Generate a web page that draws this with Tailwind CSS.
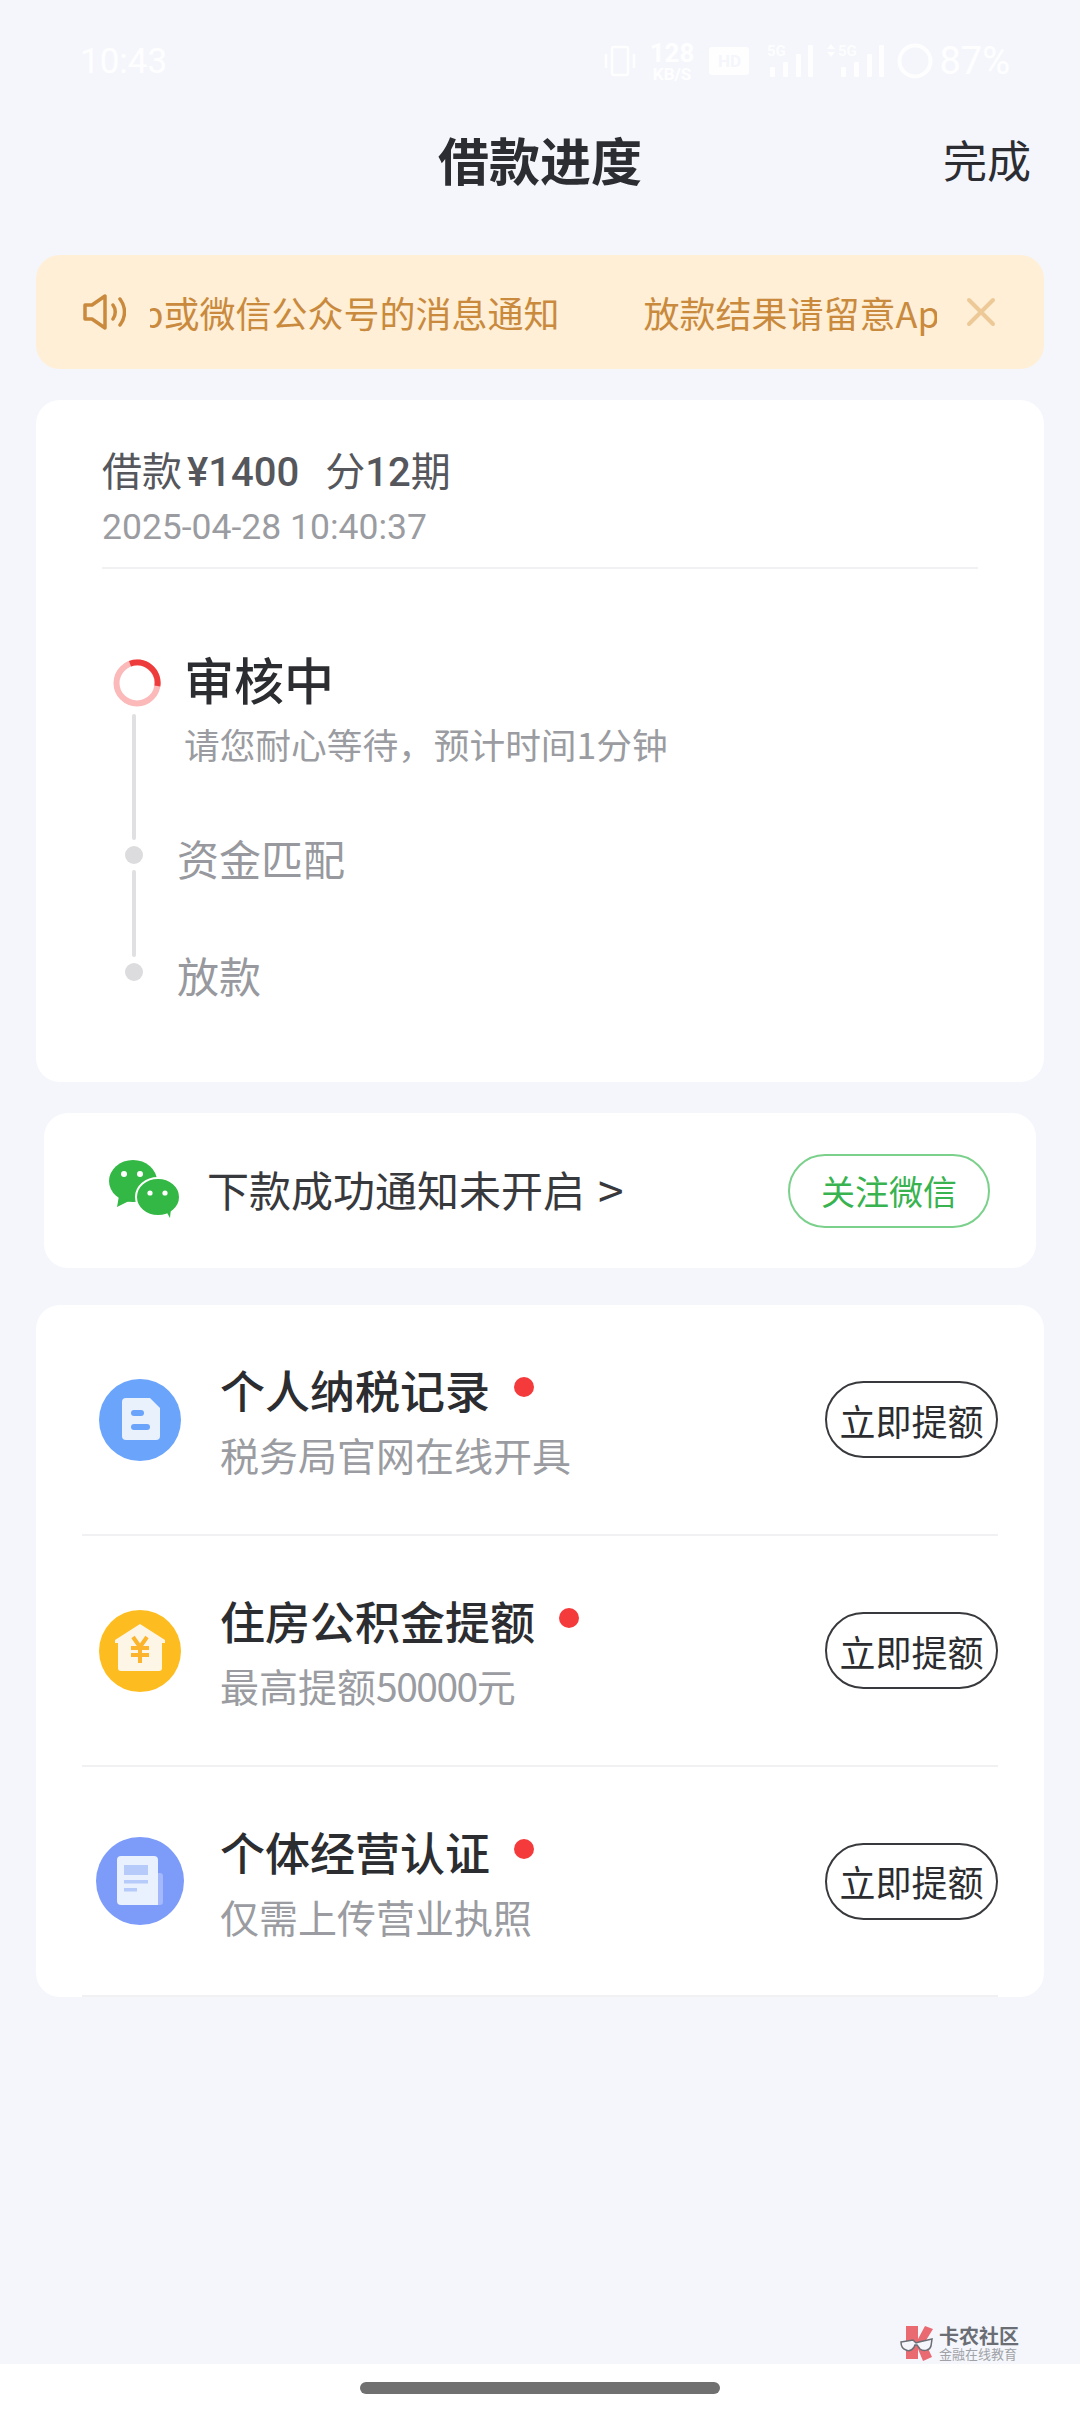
<!DOCTYPE html>
<html lang="zh-CN">
<head>
<meta charset="utf-8">
<script src="https://cdn.jsdelivr.net/npm/@tailwindcss/browser@4"></script>
<title>借款进度</title>
</head>
<body class="m-0">
<div class="relative w-[1080px] h-[2412px] overflow-hidden flex flex-col bg-[#f4f6fb] font-['Noto_Sans_CJK_SC',sans-serif] text-[#2b2d33]">

  <!-- status bar -->
  <div class="h-[122px] shrink-0 flex items-center justify-between pl-[80px] pr-[70px] text-white/90 font-['Roboto',sans-serif]">
    <span class="text-[35px] leading-none">10:43</span>
    <div class="flex items-center">
      <svg width="32" height="34" viewBox="0 0 32 34" fill="none" stroke="#fff" stroke-opacity=".9" stroke-width="2.5"><rect x="8" y="3" width="16" height="28" rx="2"/><path d="M2 10v14M30 10v14"/></svg>
      <div class="ml-[14px] flex flex-col items-center font-bold">
        <span class="text-[26px] leading-[26px]">128</span>
        <span class="text-[17px] leading-[17px]">KB/S</span>
      </div>
      <div class="ml-[15px] w-[40px] h-[28px] bg-white/90 rounded-[3px] flex items-center justify-center text-[#f4f6fb] text-[17px] font-bold leading-none">HD</div>
      <svg width="47" height="36" viewBox="0 0 47 36" fill="#fff" fill-opacity=".9" class="ml-[18px]"><text x="0" y="13" font-size="15" font-weight="700" font-family="Roboto">5G</text><rect x="3" y="24" width="5" height="10" rx="1"/><rect x="16" y="19" width="5" height="15" rx="1"/><rect x="29" y="11" width="5" height="23" rx="1"/><rect x="41" y="2" width="5" height="32" rx="1"/></svg>
      <svg width="58" height="36" viewBox="0 0 58 36" fill="#fff" fill-opacity=".9" class="ml-[13px]"><path d="M0 6l4-5 4 5zM0 9l4 5 4-5z"/><text x="11" y="13" font-size="15" font-weight="700" font-family="Roboto">5G</text><rect x="14" y="24" width="5" height="10" rx="1"/><rect x="27" y="19" width="5" height="15" rx="1"/><rect x="40" y="11" width="5" height="23" rx="1"/><rect x="52" y="2" width="5" height="32" rx="1"/></svg>
      <svg width="36" height="36" viewBox="0 0 36 36" fill="none" stroke="#fff" stroke-opacity=".9" stroke-width="4" class="ml-[12px]"><circle cx="18" cy="18" r="15.5"/></svg>
      <span class="ml-[6px] text-[38px] leading-none">87%</span>
    </div>
  </div>

  <!-- header -->
  <div class="h-[74px] shrink-0 grid grid-cols-3 items-center">
    <span></span>
    <h1 class="text-center text-[51px] leading-none font-bold">借款进度</h1>
    <span class="text-right pr-[49px] text-[44px] leading-none">完成</span>
  </div>

  <!-- notice -->
  <div class="mt-[59px] mx-[36px] h-[114px] shrink-0 rounded-[24px] bg-[#ffefd6] flex items-center pl-[46px] pr-[46px] text-[#c98a3e]">
    <svg width="44" height="38" viewBox="0 0 44 38" fill="none" stroke="#c98a3e" stroke-width="3.5" stroke-linejoin="round" stroke-linecap="round" class="shrink-0"><path d="M3 12h7L23 3v32L10 26H3z"/><path d="M31 12c3 4 3 10 0 14M38 6c6 8 6 18 0 26"/></svg>
    <div class="ml-[24px] w-[787px] overflow-hidden shrink-0">
      <div class="flex whitespace-nowrap text-[36px] leading-[50px] -ml-[305px]">
        <span class="shrink-0">放款结果请留意App或微信公众号的消息通知</span>
        <span class="shrink-0 pl-[84px]">放款结果请留意App或微信公众号的消息通知</span>
      </div>
    </div>
    <svg width="32" height="32" viewBox="0 0 32 32" fill="none" stroke="#edc998" stroke-width="4" stroke-linecap="round" class="ml-[28px] shrink-0"><path d="M4 4l24 24M28 4L4 28"/></svg>
  </div>

  <!-- progress card -->
  <div class="mt-[31px] mx-[36px] h-[682px] shrink-0 rounded-[24px] bg-white pt-[44px] px-[66px]">
    <div class="pb-[20px] border-b-2 border-[#f1f1f3]">
      <div class="flex items-baseline text-[40px] leading-[50px] text-[#55575c] font-['Roboto','Noto_Sans_CJK_SC',sans-serif]"><span class="font-['Noto_Sans_CJK_SC',sans-serif]">借款</span><span class="ml-[5px] font-medium">¥1400</span><span class="ml-[26px] font-['Noto_Sans_CJK_SC',sans-serif]">分</span><span class="font-medium">12</span><span class="font-['Noto_Sans_CJK_SC',sans-serif]">期</span></div>
      <div class="mt-[9px] text-[35.5px] leading-[40px] text-[#9a9ca1] font-['Roboto',sans-serif]">2025-04-28 10:40:37</div>
    </div>

    <div class="mt-[90px] flex">
      <div class="w-[64px] shrink-0 flex flex-col items-center">
        <svg width="48" height="48" viewBox="0 0 48 48" fill="none" stroke-width="6" class="ml-[6px]">
          <circle cx="24" cy="24" r="20.5" stroke="#fbb9b9"/>
          <path d="M17 4.7A20.5 20.5 0 0 1 44.4 27" stroke="#ee3b3b"/>
        </svg>
        <div class="mt-[7px] w-[4px] h-[126px] rounded-full bg-[#e0e0e2]"></div>
        <div class="mt-[6px] w-[18px] h-[18px] rounded-full bg-[#dcdcde]"></div>
        <div class="mt-[6px] w-[4px] h-[87px] rounded-full bg-[#e0e0e2]"></div>
        <div class="mt-[6px] w-[18px] h-[18px] rounded-full bg-[#dcdcde]"></div>
      </div>
      <div class="-mt-[11px]">
        <div class="ml-[18px] text-[50px] leading-[60px] font-medium text-[#2b2d30]">审核中</div>
        <div class="ml-[18px] mt-[11px] text-[35.7px] leading-[50px] text-[#9a9ca1] whitespace-nowrap">请您耐心等待，预计时间1分钟</div>
        <div class="ml-[11px] mt-[61px] text-[42px] leading-[56px] text-[#97999e]">资金匹配</div>
        <div class="ml-[11px] mt-[61px] text-[42px] leading-[56px] text-[#97999e]">放款</div>
      </div>
    </div>
  </div>

  <!-- wechat card -->
  <div class="mt-[31px] mx-[44px] h-[155px] shrink-0 rounded-[24px] bg-white flex items-center pl-[64px] pr-[46px]">
    <svg width="72" height="60" viewBox="0 0 72 60" class="shrink-0 -mt-[4px]">
      <ellipse cx="25" cy="22" rx="24" ry="21" fill="#33b845"/>
      <path d="M11 37l-2 11 12-6z" fill="#33b845"/>
      <ellipse cx="50" cy="38" rx="22" ry="19" fill="#33b845" stroke="#fff" stroke-width="2"/>
      <path d="M58 52l4 7 1-10z" fill="#33b845"/>
      <circle cx="16" cy="15" r="3" fill="#fff"/><circle cx="32" cy="15" r="3" fill="#fff"/>
      <circle cx="42" cy="34" r="2.6" fill="#fff"/><circle cx="57" cy="34" r="2.6" fill="#fff"/>
    </svg>
    <div class="ml-[27px] -mt-[3px] flex items-center text-[42px] leading-none text-[#38393d] whitespace-nowrap"><span>下款成功通知未开启</span><span class="ml-[13px] text-[46px] leading-none">&gt;</span></div>
    <div class="ml-auto w-[202px] h-[74px] rounded-full border-2 border-[#7bd08b] flex items-center justify-center text-[34px] leading-none text-[#38b34f]">关注微信</div>
  </div>

  <!-- list card -->
  <div class="mt-[37px] mx-[36px] h-[692px] shrink-0 rounded-[24px] bg-white px-[46px] flex flex-col">
    <div class="h-[231px] shrink-0 border-b-2 border-[#f1f1f3] flex items-center">
      <div class="w-[88px] ml-[14px] shrink-0 flex justify-center">
        <svg width="82" height="82" viewBox="0 0 82 82">
          <circle cx="41" cy="41" r="41" fill="#6ba4fb"/>
          <path d="M27 19h24l10 10v28a4 4 0 0 1-4 4H27a4 4 0 0 1-4-4V23a4 4 0 0 1 4-4z" fill="#e9f1fd"/>
          <rect x="32" y="31" width="13" height="6" rx="3" fill="#6ba4fb"/>
          <rect x="32" y="45" width="19" height="6" rx="3" fill="#6ba4fb"/>
        </svg>
      </div>
      <div class="ml-[36px] pt-[2px]">
        <div class="flex items-center h-[56px]">
          <span class="text-[45px] leading-[56px] font-medium text-[#2b2d30]">个人纳税记录</span>
          <span class="ml-[24px] -mt-[6px] w-[20px] h-[20px] rounded-full bg-[#f43a3a]"></span>
        </div>
        <div class="mt-[11px] text-[39px] leading-[50px] text-[#9a9ca1]">税务局官网在线开具</div>
      </div>
      <div class="ml-auto w-[173px] h-[77px] rounded-full border-2 border-[#38393d] flex items-center justify-center text-[36px] leading-none text-[#2b2d30]">立即提额</div>
    </div>

    <div class="h-[231px] shrink-0 border-b-2 border-[#f1f1f3] flex items-center">
      <div class="w-[88px] ml-[14px] shrink-0 flex justify-center">
        <svg width="82" height="82" viewBox="0 0 82 82">
          <circle cx="41" cy="41" r="41" fill="#fdbd21"/>
          <path d="M41 14l25 16v3h-3v25a3 3 0 0 1-3 3H22a3 3 0 0 1-3-3V33h-3v-3z" fill="#fdf6e6"/>
          <path d="M34 27l7 10 7-10M32 38h18M32 45h18M41 37v16" fill="none" stroke="#fbb42c" stroke-width="4"/>
        </svg>
      </div>
      <div class="ml-[36px] pt-[2px]">
        <div class="flex items-center h-[56px]">
          <span class="text-[45px] leading-[56px] font-medium text-[#2b2d30]">住房公积金提额</span>
          <span class="ml-[24px] -mt-[6px] w-[20px] h-[20px] rounded-full bg-[#f43a3a]"></span>
        </div>
        <div class="mt-[11px] text-[39px] leading-[50px] text-[#9a9ca1]">最高提额<span class="tracking-[-1.5px]">50000</span>元</div>
      </div>
      <div class="ml-auto w-[173px] h-[77px] rounded-full border-2 border-[#38393d] flex items-center justify-center text-[36px] leading-none text-[#2b2d30]">立即提额</div>
    </div>

    <div class="h-[230px] shrink-0 border-b-2 border-[#f1f1f3] flex items-center">
      <div class="w-[88px] ml-[14px] shrink-0 flex justify-center">
        <svg width="88" height="88" viewBox="0 0 88 88">
          <circle cx="44" cy="44" r="44" fill="#7d9bf9"/>
          <rect x="58" y="36" width="9" height="32" rx="3" fill="#a3b9fb"/>
          <path d="M25 19h33a4 4 0 0 1 4 4v45H25a4 4 0 0 1-4-4V23a4 4 0 0 1 4-4z" fill="#e9f0fe"/>
          <rect x="28" y="28" width="24" height="10" fill="#b6cbfa"/>
          <rect x="28" y="43" width="24" height="3.5" fill="#b6cbfa"/>
          <rect x="28" y="51" width="13" height="3.5" fill="#b6cbfa"/>
        </svg>
      </div>
      <div class="ml-[36px] pt-[2px]">
        <div class="flex items-center h-[56px]">
          <span class="text-[45px] leading-[56px] font-medium text-[#2b2d30]">个体经营认证</span>
          <span class="ml-[24px] -mt-[6px] w-[20px] h-[20px] rounded-full bg-[#f43a3a]"></span>
        </div>
        <div class="mt-[11px] text-[39px] leading-[50px] text-[#9a9ca1]">仅需上传营业执照</div>
      </div>
      <div class="ml-auto w-[173px] h-[77px] rounded-full border-2 border-[#38393d] flex items-center justify-center text-[36px] leading-none text-[#2b2d30]">立即提额</div>
    </div>
  </div>

  <!-- bottom gesture bar -->
  <div class="mt-auto h-[48px] shrink-0 bg-white flex items-center justify-center">
    <div class="w-[360px] h-[12px] rounded-full bg-[#707070]"></div>
  </div>

  <!-- watermark -->
  <div class="absolute left-[900px] top-[2325px] flex items-center gap-[5px]">
    <svg width="34" height="36" viewBox="0 0 34 36" class="shrink-0">
      <path d="M6 1h12v13l7-13 8 3-8 13 7 15-9 4-5-12v10H6z" fill="#ea6a72"/>
      <path d="M1 17l12-2 3 3 3-1 13-3-1 7c-1 4-7 6-11 3l-3-4-2 0c-1 4-5 7-9 5-3-1-5-4-5-8z" fill="#f4f6fb" stroke="#6c6e75" stroke-width="1.5"/>
    </svg>
    <div class="flex flex-col">
      <span class="text-[20px] leading-[22px] font-bold text-[#6b6d75] whitespace-nowrap">卡农社区</span>
      <span class="text-[13px] leading-[14px] text-[#a0a2a8] whitespace-nowrap">金融在线教育</span>
    </div>
  </div>
</div>
</body>
</html>
